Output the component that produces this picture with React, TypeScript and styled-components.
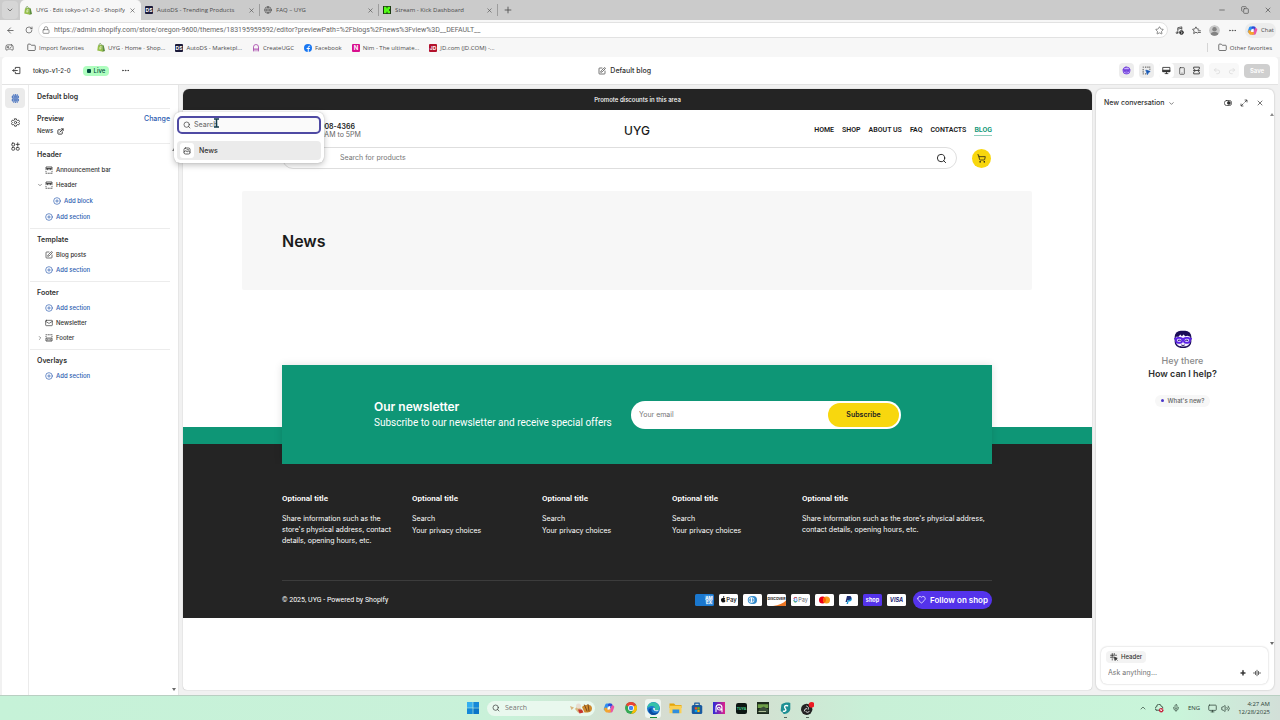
import React from "react";
import styled, { createGlobalStyle } from "styled-components";
import {
  ArrowLeft, ChevronDown, ChevronRight, ChevronUp, CirclePlus, Copy, ExternalLink, Folder, Globe, Heart, Mail,
  Mic, Minus, Monitor, MoreHorizontal, Plus, Redo2, RotateCw, Search, Smartphone, SquarePen,
  Star, Undo2, Volume2, X, Lock, Gamepad2, Image as ImageIcon, ShoppingCart,
} from "lucide-react";

const Global = createGlobalStyle`
  * { box-sizing: border-box; }
  body { margin: 0; background: #f1f1f1; font-family: Inter, "Liberation Sans", sans-serif; font-size: 6px; line-height: 10px; color: #303030; }
  button, input { font: inherit; color: inherit; border: 0; padding: 0; margin: 0; background: none; outline: 0; }
  button { display: inline-flex; align-items: center; justify-content: center; flex: none; white-space: nowrap; }
  a { color: inherit; text-decoration: none; }
  h1, h2, h3, p, ul { margin: 0; padding: 0; font: inherit; list-style: none; }
  svg { display: block; flex: none; }
`;

const Window = styled.div`
  min-height: 100vh;
  display: flex;
  flex-direction: column;
`;

/* ---------- Browser ---------- */
const Chrome = styled.header`
  background: #f7f7f7;
  font-family: "Open Sans", "Noto Sans", sans-serif;
  color: #4a4a4a;
`;
const TabStrip = styled.div`
  display: flex;
  align-items: center;
  height: 20px;
  padding: 0 8px 0 2px;
  background: #cbcbcb;
`;
const TabMenu = styled.button`
  width: 16px;
  height: 18px;
  border-radius: 4px;
  margin-right: 2px;
  background: #d6d6d6;
`;
const Tab = styled.div<{ $active?: boolean }>`
  display: flex;
  align-items: center;
  gap: 4px;
  flex: 0 1 119px;
  height: 20px;
  padding: 0 4px;
  border-right: 1px solid ${(p) => (p.$active ? "#f7f7f7" : "#a8a8a8")};
  border-image: ${(p) => (p.$active ? "none" : "linear-gradient(transparent 25%, #9d9d9d 25%, #9d9d9d 75%, transparent 75%) 1")};
  border-radius: ${(p) => (p.$active ? "5px 5px 0 0" : "0")};
  background: ${(p) => (p.$active ? "#f7f7f7" : "transparent")};
`;
const TabTitle = styled.span`
  flex: 1;
  overflow: hidden;
  white-space: nowrap;
`;
const NewTab = styled.button`
  width: 20px;
  height: 20px;
`;
const WindowButtons = styled.div`
  display: flex;
  gap: 15px;
  margin-left: auto;
`;
const AddressRow = styled.div`
  display: flex;
  align-items: center;
  height: 20px;
  padding: 0 4px 0 6px;
`;
const Nav = styled.div`
  display: flex;
  gap: 10px;
  width: 32px;
`;
const AddressBox = styled.label`
  flex: 1;
  display: flex;
  align-items: center;
  gap: 4px;
  height: 16px;
  padding: 0 3px;
  border: 1px solid #e2e2e2;
  border-radius: 8px;
  background: #fff;
  color: #666;
  font-family: Roboto, "Open Sans", sans-serif;
  font-size: 7px;
`;
const PlainInput = styled.input`
  flex: 1;
  min-width: 0;
  &::placeholder { color: #757575; opacity: 1; }
`;
const BrowserTools = styled.div`
  display: flex;
  align-items: center;
  gap: 8px;
  padding-left: 7px;
`;
const Profile = styled.span`
  width: 11px;
  height: 11px;
  border-radius: 50%;
  overflow: hidden;
`;
const ChatPill = styled.button`
  height: 15px;
  gap: 3px;
  padding: 0 2px;
  border-radius: 7px;
  background: #ececec;
`;
const Bookmarks = styled.nav`
  display: flex;
  align-items: center;
  gap: 10px;
  height: 17px;
  padding: 0 8px 2px 5px;
`;
const Bookmark = styled.a<{ $apart?: boolean }>`
  display: flex;
  align-items: center;
  gap: 3px;
  margin: 0 ${(p) => (p.$apart ? 3 : 0)}px;
  white-space: nowrap;
`;
const Divider = styled.span`
  width: 1px;
  height: 9px;
  background: #d5d5d5;
`;
const Spacer = styled.span`
  flex: 1;
`;

/* ---------- Editor shell ---------- */
const TopBar = styled.div`
  display: flex;
  align-items: center;
  justify-content: space-between;
  height: 28px;
  padding: 0 8px 0 10px;
  margin: 0 2px;
  border-bottom: 1px solid #e3e3e3;
  border-radius: 4px 4px 0 0;
  background: #fff;
  font-weight: 500;
`;
const Cluster = styled.div<{ $gap: number }>`
  display: flex;
  align-items: center;
  gap: ${(p) => p.$gap}px;
`;
const PageName = styled.span`
  font-size: 7px;
`;
const Live = styled.span`
  display: flex;
  align-items: center;
  gap: 3px;
  height: 10px;
  padding: 0 4px;
  border-radius: 4px;
  background: #affebf;
  color: #014b40;
  &::before { content: ""; width: 4px; height: 4px; border-radius: 1px; background: #014b40; }
`;
const ToolButton = styled.button<{ $on?: boolean; $bare?: boolean }>`
  width: 15px;
  height: 15px;
  border-radius: 4px;
  background: ${(p) => (p.$bare ? "transparent" : p.$on ? "#fff" : "#ededed")};
`;
const ToolGroup = styled.div<{ $faint?: boolean }>`
  display: flex;
  border-radius: 4px;
  background: ${(p) => (p.$faint ? "#f8f8f8" : "#ededed")};
  color: ${(p) => (p.$faint ? "#d8d8d8" : "#303030")};
`;
const Save = styled.button`
  width: 26px;
  height: 14px;
  border-radius: 4px;
  background: #cfcfcf;
  color: #fff;
  font-weight: 600;
`;
const Editor = styled.div`
  flex: 1;
  display: flex;
  align-items: stretch;
  margin: 0 2px;
`;
const Rail = styled.nav`
  display: flex;
  flex-direction: column;
  align-items: center;
  gap: 4px;
  width: 27px;
  padding-top: 3px;
  border-right: 1px solid #ebebeb;
  background: #fff;
`;
const RailButton = styled.button<{ $on?: boolean }>`
  width: 20px;
  height: 20px;
  border-radius: 4px;
  background: ${(p) => (p.$on ? "#ebebeb" : "transparent")};
  color: ${(p) => (p.$on ? "#2257b5" : "#303030")};
`;
const Side = styled.aside`
  position: relative;
  width: 150px;
  padding-left: 1px;
  border-right: 1px solid #e6e6e6;
  background: #fff;
  font-weight: 500;
`;
const SideTitle = styled.h1`
  height: 24px;
  margin-right: 8px;
  padding-left: 7px;
  line-height: 24px;
  font-size: 7px;
  font-weight: 600;
  border-bottom: 1px solid #ececec;
`;
const PreviewBlock = styled.div`
  position: relative;
  height: 35px;
  margin-right: 8px;
  padding: 4px 0 0 7px;
  border-bottom: 1px solid #ececec;
`;
const PreviewLine = styled.div`
  display: flex;
  align-items: center;
  gap: 4px;
  height: 12px;
`;
const TextLink = styled.button`
  margin-left: auto;
  color: #2c5cb0;
  font-size: 7px;
  font-weight: 500;
`;
const Section = styled.section`
  margin-right: 8px;
  padding: 4px 0 4px 7px;
  border-bottom: 1px solid #ececec;
  &:last-of-type { border-bottom: 0; }
`;
const SectionTitle = styled.h2`
  line-height: 14px;
  font-size: 7px;
  font-weight: 600;
`;
const Row = styled.button<{ $depth?: number; $link?: boolean }>`
  display: flex;
  justify-content: flex-start;
  gap: 3px;
  width: 100%;
  height: ${(p) => (p.$depth ? 17 : 15)}px;
  padding-left: ${(p) => (p.$depth ? 8 : 0)}px;
  color: ${(p) => (p.$link ? "#2c5cb0" : "#303030")};
`;
const Caret = styled.span`
  width: 6px;
  margin-right: -1px;
`;
const Strong = styled.span`
  font-size: 7px;
  font-weight: 600;
`;
const ScrollArrow = styled.span<{ $up?: boolean; $top?: number; $bottom?: number; $right: number }>`
  position: absolute;
  right: ${(p) => p.$right}px;
  ${(p) => (p.$top !== undefined ? `top: ${p.$top}px;` : `bottom: ${p.$bottom}px;`)}
  border: 2px solid transparent;
  ${(p) => (p.$up ? "border-bottom: 3px solid #8a8a8a; border-top: 0;" : "border-top: 3px solid #6a6a6a; border-bottom: 0;")}
`;

/* ---------- Popover ---------- */
const Popover = styled.div`
  position: absolute;
  z-index: 5;
  left: 144px;
  top: 3px;
  width: 150px;
  padding: 4px 3px 3px;
  border-radius: 6px;
  background: #fff;
  box-shadow: 0 2px 6px rgba(0, 0, 0, 0.25), 0 0 1px rgba(0, 0, 0, 0.3);
  font-size: 7px;
`;
const PopSearch = styled.label`
  display: flex;
  align-items: center;
  gap: 3px;
  height: 18px;
  padding: 0 4px;
  margin: 0 0 7px;
  border: 2px solid #4f4aa3;
  border-radius: 5px;
  background: #fafafa;
`;
const PopItem = styled.button`
  justify-content: flex-start;
  gap: 5px;
  width: 100%;
  height: 19px;
  padding: 0 3px;
  border-radius: 4px;
  background: #ebebeb;
  font-weight: 500;
`;
const PopIcon = styled.span`
  display: grid;
  place-items: center;
  width: 14px;
  height: 15px;
  border-radius: 3px;
  background: #fff;
`;
const Pointer = styled.svg`
  position: absolute;
  left: 39px;
  top: 6px;
`;

/* ---------- Store preview ---------- */
const Store = styled.main`
  flex: 1;
  min-width: 0;
  margin: 4px 4px 5px 4px;
  border-radius: 6px 6px 4px 4px;
  overflow: hidden;
  background: #fff;
  color: #1b1b1b;
  font-size: 7px;
  box-shadow: 0 0 1px rgba(0, 0, 0, 0.4);
`;
const Announcement = styled.p`
  background: #242424;
  color: #fff;
  line-height: 21px;
  text-align: center;
  font-size: 6px;
  font-weight: 500;
`;
const StoreHeader = styled.header`
  display: grid;
  grid-template-columns: 1fr auto 1fr;
  align-items: center;
  height: 37px;
  padding: 4px 100px 0 99px;
`;
const Phone = styled.div`
  display: flex;
  align-items: center;
  gap: 22px;
  line-height: 8px;
`;
const PhoneNumber = styled.p`
  font-weight: 600;
`;
const Hours = styled.p`
  color: #666;
`;
const Logo = styled.a`
  font-size: 12px;
  line-height: 16px;
  font-weight: 500;
`;
const Menu = styled.nav`
  display: flex;
  justify-content: flex-end;
  gap: 8px;
  font-family: Roboto, Inter, sans-serif;
  font-size: 7px;
  font-weight: 600;
`;
const MenuLink = styled.a<{ $current?: boolean }>`
  line-height: 9px;
  white-space: nowrap;
  color: ${(p) => (p.$current ? "#0e9676" : "inherit")};
  border-bottom: 1px solid ${(p) => (p.$current ? "#8fcfbf" : "transparent")};
`;
const SearchRow = styled.div`
  display: flex;
  align-items: center;
  gap: 15px;
  padding: 0 101px 0 99px;
`;
const StoreSearch = styled.label`
  flex: 1;
  display: flex;
  align-items: center;
  height: 22px;
  padding: 0 9px 0 57px;
  border: 1px solid #dedede;
  border-radius: 11px;
`;
const Cart = styled.button`
  width: 19px;
  height: 19px;
  border-radius: 50%;
  background: #f8d70e;
`;
const Hero = styled.section`
  display: flex;
  align-items: center;
  height: 99px;
  margin: 22px 60px 75px 59px;
  padding: 0 40px;
  border-radius: 2px;
  background: #f7f7f7;
`;
const HeroTitle = styled.h1`
  font-size: 16px;
  line-height: 22px;
  font-weight: 600;
`;
const NewsletterBand = styled.section`
  padding: 0 100px 0 99px;
  background: linear-gradient(#fff 62px, #0e9676 62px, #0e9676 79px, #242424 79px);
`;
const NewsletterCard = styled.div`
  display: flex;
  align-items: center;
  justify-content: space-between;
  height: 99px;
  padding: 0 91px 0 92px;
  background: #0e9676;
  color: #fff;
  box-shadow: 0 0 8px rgba(0, 0, 0, 0.12);
`;
const NewsTitle = styled.h2`
  font-size: 12px;
  line-height: 16px;
  font-weight: 600;
`;
const NewsText = styled.p`
  font-family: Roboto, Inter, sans-serif;
  font-size: 10px;
  line-height: 16px;
  white-space: nowrap;
`;
const Subscribe = styled.form`
  display: flex;
  width: 270px;
  height: 28px;
  padding: 2px 2px 2px 8px;
  border-radius: 14px;
  background: #fff;
  color: #222;
`;
const SubscribeButton = styled.button`
  width: 71px;
  border-radius: 12px;
  background: #f8d70e;
  font-weight: 600;
`;
const StoreFooter = styled.footer`
  padding: 0 100px 0 99px;
  background: #242424;
  color: #fff;
`;
const FooterGrid = styled.div`
  display: grid;
  grid-template-columns: repeat(4, 11fr) 19fr;
  gap: 20px;
  height: 117px;
  padding-top: 29px;
  border-bottom: 1px solid #3c3c3c;
`;
const FooterTitle = styled.h3`
  font-family: Roboto, Inter, sans-serif;
  font-size: 8px;
  font-weight: 600;
  line-height: 12px;
  margin-bottom: 8px;
`;
const FooterText = styled.p`
  line-height: 11px;
`;
const FooterLink = styled.a`
  display: block;
  line-height: 12px;
`;
const FooterBottom = styled.div`
  display: flex;
  align-items: center;
  justify-content: space-between;
  height: 37px;
`;
const Copyright = styled.span`
  font-family: Roboto, Inter, sans-serif;
`;
const Follow = styled.button`
  gap: 4px;
  width: 79px;
  height: 18px;
  margin-left: 2px;
  border-radius: 9px;
  background: #5433eb;
  color: #fff;
  font-size: 8px;
  font-weight: 600;
`;

/* ---------- Assistant ---------- */
const AssistantPanel = styled.aside`
  position: relative;
  display: flex;
  flex-direction: column;
  width: 178px;
  margin: 4px 4px 5px 0;
  padding: 0 6px 6px 5px;
  border-radius: 6px;
  background: #fff;
  box-shadow: 0 0 2px rgba(0, 0, 0, 0.25);
`;
const AssistantHeader = styled.div`
  display: flex;
  align-items: center;
  height: 28px;
  gap: 8px;
  padding: 0 4px 0 3px;
`;
const ConversationButton = styled.button`
  gap: 4px;
  margin-right: auto;
  font-size: 7px;
  font-weight: 500;
`;
const Greeting = styled.div`
  flex: 1;
  display: flex;
  flex-direction: column;
  align-items: center;
  justify-content: center;
  font-size: 9px;
  line-height: 13px;
  font-weight: 600;
  padding-bottom: 29px;
  padding-right: 4px;
  text-align: center;
`;
const Hey = styled.p`
  margin-top: 5px;
  color: #8a8a8a;
  font-weight: 500;
`;
const NewPill = styled.button`
  gap: 4px;
  height: 12px;
  margin-top: 15px;
  padding: 0 6px;
  border-radius: 6px;
  background: #f7f7f7;
  color: #616161;
  font-size: 6px;
  font-weight: 500;
  &::before { content: ""; width: 3px; height: 3px; border-radius: 50%; background: #4a35c8; }
`;
const Composer = styled.div`
  display: flex;
  flex-direction: column;
  gap: 4px;
  height: 37px;
  padding: 4px 5px;
  border-radius: 6px;
  box-shadow: 0 0 2px rgba(0, 0, 0, 0.25);
`;
const ContextChip = styled.button`
  align-self: flex-start;
  gap: 3px;
  height: 12px;
  padding: 0 4px;
  border-radius: 4px;
  background: #f3f3f3;
  font-weight: 500;
`;
const ComposerRow = styled.label`
  display: flex;
  align-items: center;
  gap: 6px;
  font-size: 7px;
  padding: 1px 2px 0 2px;
`;

/* ---------- Taskbar ---------- */
const Taskbar = styled.footer`
  display: grid;
  grid-template-columns: 1fr auto 1fr;
  align-items: center;
  height: 25px;
  padding: 0 10px;
  border-top: 1px solid #b9cfc2;
  background: linear-gradient(90deg, #c6f2d8 0%, #c9f1d9 40%, #d6dcd1 50%, #d4dfd1 58%, #c8f0d7 68%, #c9f5da 92%, #d2dfd8 100%);
  font-family: "Open Sans", "Noto Sans", sans-serif;
`;
const Apps = styled.div`
  grid-column: 2;
  display: flex;
  align-items: center;
  gap: 6px;
`;
const AppButton = styled.button<{ $on?: boolean }>`
  position: relative;
  width: 16px;
  height: 19px;
  border-radius: 3px;
  background: ${(p) => (p.$on ? "#eef5ef" : "transparent")};
`;
const Running = styled.span<{ $wide?: boolean }>`
  position: absolute;
  bottom: 0;
  width: ${(p) => (p.$wide ? 7 : 3)}px;
  height: 1px;
  background: ${(p) => (p.$wide ? "#1a8a3a" : "#56665c")};
`;
const TaskSearch = styled.label`
  display: flex;
  align-items: center;
  gap: 5px;
  width: 108px;
  height: 15px;
  padding: 0 2px 0 5px;
  border-radius: 8px;
  background: #e9f8ee;
  font-size: 7px;
`;
const Tray = styled.div`
  justify-self: end;
  display: flex;
  align-items: center;
  gap: 8px;
  color: #2e4237;
`;
const Clock = styled.time`
  text-align: right;
  font-size: 6px;
  line-height: 8px;
`;

/* ---------- Drawings ---------- */
const Svg = ({ s = 8, h, vb = "0 0 16 16", children }: { s?: number; h?: number; vb?: string; children: React.ReactNode }) => (
  <svg width={s} height={h ?? s} viewBox={vb} fill="none" stroke="currentColor" strokeWidth="1.5" strokeLinecap="round" strokeLinejoin="round" aria-hidden="true">{children}</svg>
);
const ShopifyMark = () => (
  <Svg s={8} h={9} vb="0 0 16 18"><g stroke="none"><path d="M2 5l8.500-1.500L12 17.500 0.500 15z" fill="#95bf47" /><path d="M10.500 3.500l3 1.500L16 16l-4.500 1.500z" fill="#5e8e3e" /></g><path d="M4 5c0-5 4-6 4.500-1" stroke="#5e8e3e" /><path d="M8.500 7.600c-2.500-1-3.500 1.200-1.800 2.300s1.200 2.800-1.400 1.900" stroke="#fff" /></Svg>
);
const LetterMark = ({ bg, text, s = 8, fg = "#fff" }: { bg: string; text: string; s?: number; fg?: string }) => (
  <Svg s={s}><rect width="16" height="16" rx="2" fill={bg} stroke="none" /><text x="8" y="12" fontSize={text.length > 1 ? 10 : 12} fontWeight="700" textAnchor="middle" fill={fg} stroke="none" fontFamily="Inter">{text}</text></Svg>
);
const KickMark = () => (
  <Svg s={8}><rect width="16" height="16" fill="#1c3a12" stroke="none" /><path d="M2 1.500h5v3h2v-3h5v5h-2v3h2v5H9v-3H7v3H2z" fill="#53fc18" stroke="none" /></Svg>
);
const Copilot = ({ s = 11 }: { s?: number }) => (
  <Svg s={s}><g strokeWidth="4"><path d="M3 9.500L5 4h4" stroke="#2d8ff0" /><path d="M8.500 4h2l1 3" stroke="#2f49d8" /><path d="M13 6.500L11 12H8" stroke="#e957a5" /><path d="M3.500 9.500L5 12h3.500" stroke="#f3a52f" /></g><path d="M6 10l2-4.500h2L8.500 10z" fill="#fff" stroke="none" /></Svg>
);
const Avatar = () => (
  <Svg s={11}><circle cx="8" cy="8" r="8" fill="#c9c9c9" stroke="none" /><circle cx="8" cy="6" r="3.200" fill="#838383" stroke="none" /><path d="M2.500 13.500c0-5 11-5 11 0-3 3-8 3-11 0z" fill="#838383" stroke="none" /></Svg>
);
const FavoritesIcon = () => (
  <Svg s={9}><path d="M9.500 12.500L7 11l-4 2.500.8-4.500L1 5.800l4-.6L7 1.500l2 3.700 3 .5M11 8.500h4M11 11.500h4" /></Svg>
);
const SectionTop = () => (
  <Svg s={8}><path d="M2 5V2h12v3M2 7.500L3 5h10l1 2.500M5 7.500V5.500M8 7.500V5.500M11 7.500V5.500M2 11v.500M14 11v.500M2 14.500h1M6 14.500h1M9.500 14.500h1M14 14.500h-1" strokeWidth="1.600" /></Svg>
);
const SectionBottom = () => (
  <Svg s={8}><path d="M2 9v5h12V9zM5 11.500h.500M8 11.500h.500M11 11.500h.500M2 5.500V5M2 1.500h1M6 1.500h1M9.500 1.500h1M14 1.500h-1M14 5.500V5" strokeWidth="1.600" /></Svg>
);
const SectionsIcon = () => (
  <Svg s={9}><path d="M3 3.500h10v3.500H3zM3 9h10v3.500H3zM5 1v1M8 1v1M11 1v1M5 14.500v.500M8 14.500v.500M11 14.500v.500M5.500 5.200h5M5.500 10.800h5" /></Svg>
);
const GearIcon = () => (
  <Svg s={9}><path d="M6.500 1.500h3l.6 2 1.600.9 2-.6 1.500 2.600L13.700 8l1.500 1.600-1.500 2.600-2-.6-1.600.9-.6 2h-3l-.6-2-1.600-.9-2 .6L.8 9.600 2.300 8 .8 6.400l1.500-2.600 2 .6 1.600-.9z" /><circle cx="8" cy="8" r="2" /></Svg>
);
const AppsIcon = () => (
  <Svg s={9}><rect x="1.500" y="2" width="5" height="5" rx="1.500" /><rect x="1.500" y="9.500" width="5" height="5" rx="1.500" /><rect x="9.500" y="9.500" width="5" height="5" rx="1.500" /><path d="M12 1.500v5.500M9.300 4.200h5.500" /></Svg>
);
const SidekickIcon = () => (
  <Svg s={9}><g stroke="#6a35d8"><rect x="2" y="2" width="12" height="12" rx="5" fill="#c9b3fb" /><path d="M2 6.500h12M4 8h3.500v1.500H4zM9 8h3.500v1.500H9zM6.500 12h3" /></g></Svg>
);
const SelectIcon = () => (
  <Svg s={9}><path d="M2 2h.500M6 2h1M10 2h1M14 2h-.500M2 6v1M2 10v1M2 14h.500M6 14h1M14 5.500V6" /><path d="M7.500 7.500l7 2.300-3 1.500-1.500 3.200z" fill="#1556b4" stroke="#1556b4" /></Svg>
);
const DesktopIcon = () => (
  <Svg s={9}><path d="M2 2.500h12v7.500H2z" /><path d="M2 7.500h12V10H2z" fill="currentColor" /><path d="M5.500 13.500h5M8 10.500v3" /></Svg>
);
const FullWidthIcon = () => (
  <Svg s={9}><path d="M3 5V2h10v3M3 11v3h10v-3M3.500 8h9M5 6L3 8l2 2M11 6l2 2-2 2" /></Svg>
);
const ExpandIcon = () => (
  <Svg s={8}><path d="M10 2h4v4M13.500 2.500L9.500 6.500M6 14H2v-4M2.500 13.500l4-4" /></Svg>
);
const PanelToggle = () => (
  <Svg s={8}><rect x="1" y="3" width="14" height="10" rx="4" /><rect x="7" y="5.500" width="5.500" height="5" rx="1.500" fill="currentColor" /></Svg>
);
const SidekickFace = () => (
  <Svg s={20} vb="0 0 36 36">
    <rect x="3" y="3" width="30" height="31" rx="11" fill="#1a0b57" stroke="none" />
    <path d="M5 14h5l3-4 3 3 3-3 3 3 4-1 5 2v9c-2 8-8 8.500-13 8.500S7 31 5 23z" fill="#f4efff" stroke="none" />
    <rect x="2" y="16" width="32" height="3" fill="#5b21e6" stroke="none" />
    <rect x="5.500" y="16" width="11" height="9" rx="4" fill="#cdb6ff" stroke="#5b21e6" strokeWidth="3" />
    <rect x="19.500" y="16" width="11" height="9" rx="4" fill="#cdb6ff" stroke="#5b21e6" strokeWidth="3" />
    <path d="M9.500 21.500l2-2 2 2M22.500 21.500l2-2 2 2M15.500 29c1.500 1 3.500 1 5 0" stroke="#1a0b57" strokeWidth="1.800" />
  </Svg>
);
const SparkIcon = () => (
  <Svg s={8}><path d="M8 3c.5 3.500 1.500 4.500 5 5-3.500.5-4.500 1.500-5 5-.5-3.500-1.500-4.500-5-5 3.500-.5 4.500-1.500 5-5z" fill="currentColor" /></Svg>
);
const WaveIcon = () => (
  <Svg s={8}><path d="M2 7v2M5 5v6M8 2.500v11M11 5v6M14 7v2" /></Svg>
);
const TargetIcon = () => (
  <Svg s={8}><path d="M4.500 1v3M8.500 1v3M1 4.500h3M1 8.500h3M4.500 4.500h4M4.500 4.500v6M11 4.500h2M4.500 13v1" /><path d="M8 8l6.500 2.500-3 1-1 3z" fill="currentColor" /><path d="M12 12l2.500 2.500" /></Svg>
);
const BlogIcon = () => (
  <Svg s={8}><rect x="2" y="2" width="12" height="12" rx="3" /><path d="M2 10l3.500-2.500 3 2 2-1.500 3.500 2.500M8 5.500h3" /></Svg>
);

const Pay = ({ bg = "#fff", children }: { bg?: string; children: React.ReactNode }) => (
  <svg width="19" height="12" viewBox="0 0 38 24" aria-hidden="true" fontFamily="Inter" fontWeight="700" textAnchor="middle"><rect width="38" height="24" rx="3" fill={bg} />{children}</svg>
);
const Payments = () => (
  <>
    <Pay bg="#1a78cf"><g fontSize="9" fill="#fff"><path d="M19 3h17v18H22z" fill="#4f9be0" /><text x="28" y="11">AM</text><text x="28" y="20">EX</text></g></Pay>
    <Pay><path d="M8 8c1-1 4-1 4.500 1-2 1-1.500 4 .5 4.500-1 3-2.500 4-4.500 3-2 1-4-1-4.500-4S5.500 7.500 8 8zM8 7c0-2 1-3 2.500-3 0 2-1 3-2.500 3z" fill="#111" /><text x="25" y="16" fontSize="12" fontWeight="500" fill="#111">Pay</text></Pay>
    <Pay><circle cx="20" cy="12" r="8" fill="#3086c8" /><circle cx="17" cy="12" r="7.500" fill="#3f97d6" /><circle cx="17" cy="12" r="5.500" fill="#fff" /><path d="M15.500 8v8a4.200 4.200 0 010-8zM18.500 8v8a4.200 4.200 0 000-8z" fill="#3086c8" /></Pay>
    <Pay><path d="M38 13v8a3 3 0 01-3 3H12c12-2 20-5 26-11z" fill="#ee7623" /><text x="19" y="12" fontSize="7" fill="#222">DISCOVER</text></Pay>
    <Pay><text x="9" y="16" fontSize="11" fill="#4285f4">G</text><path d="M5 13c1 3 4 4 6 2.500" stroke="#34a853" strokeWidth="2" fill="none" /><path d="M5.500 9c1-2 4-3 6-1" stroke="#ea4335" strokeWidth="2" fill="none" /><text x="24" y="16" fontSize="11" fontWeight="400" fill="#5f6368">Pay</text></Pay>
    <Pay><circle cx="15" cy="12" r="7" fill="#eb001b" /><circle cx="23" cy="12" r="7" fill="#f79e1b" /><path d="M19 6.300a7 7 0 010 11.400 7 7 0 010-11.400z" fill="#ff5f00" /></Pay>
    <Pay><path d="M19 7h5c3 1 2 8-3 8h-2l-1 5h-3z" fill="#179bd7" /><path d="M16 4h6c4 0 4 8-3 8h-2l-1 4h-3z" fill="#1f2f74" /></Pay>
    <Pay bg="#5433eb"><text x="19" y="15" fontSize="11" fill="#fff">shop</text></Pay>
    <Pay><text x="19" y="16" fontSize="11" fontStyle="italic" fill="#1a1f71">VISA</text></Pay>
  </>
);

const WindowsIcon = () => <Svg s={12}><g stroke="none" fill="#1588d8"><path d="M0 0h7.600v7.600H0z" fill="#34aef0" /><path d="M8.400 0H16v7.600H8.400zM0 8.400h7.600V16H0z" /><path d="M8.400 8.400H16V16H8.400z" fill="#0a74c8" /></g></Svg>;
const ChromeIcon = () => <Svg s={12}><g stroke="none"><circle cx="8" cy="8" r="8" fill="#34a853" /><path d="M8 8L1 4a8 8 0 0114 0z" fill="#ea4335" /><path d="M8 8l7-4a8 8 0 01-7 12l3.500-6z" fill="#fbbc05" /><circle cx="8" cy="8" r="4" fill="#fff" /><circle cx="8" cy="8" r="3" fill="#4285f4" /></g></Svg>;
const EdgeIcon = () => <Svg s={13}><g stroke="none"><circle cx="8" cy="8" r="8" fill="#1b78cf" /><path d="M0 8C1 1 7-1 11 1s6 7 3 9H9c2-3 0-5-3-5S1 7 0 8z" fill="#35c1a8" /><path d="M6 8c-2 4 2 7 7 5l1.500-.5c-3 4-8 4.500-11 1.500S2 7 6 8z" fill="#0c4ba0" /><path d="M7.500 7.500c2-1 3 .5 2 2.500h5c-2 2.500-7 2-7-2.500z" fill="#eaf6f5" /></g></Svg>;
const ExplorerIcon = () => <Svg s={13} h={12}><g stroke="none"><path d="M0 2h6l2 2h8v4H0z" fill="#e5a50a" /><path d="M0 5h16v10H0z" fill="#fbd054" /><path d="M4 10h9v5H4z" fill="#2f8ede" /></g></Svg>;
const StoreIcon = () => <Svg s={12}><g stroke="none"><rect x="1" y="4" width="14" height="12" rx="2" fill="#195aa0" /><path d="M5 7h3v3H5z" fill="#f25022" /><path d="M8.500 7h3v3h-3z" fill="#7fba00" /><path d="M5 10.500h3v3H5z" fill="#00a4ef" /><path d="M8.500 10.500h3v3h-3z" fill="#ffb900" /></g><path d="M5 4V1.500h6V4" stroke="#195aa0" /></Svg>;
const UgcIcon = () => <Svg s={12}><defs><linearGradient id="ugc"><stop stopColor="#2b2bd8" /><stop offset="1" stopColor="#e0218a" /></linearGradient></defs><rect width="16" height="16" fill="url(#ugc)" stroke="none" /><g stroke="#fff"><path d="M4 13V7.500a4 4 0 018 0c0 4-6 4-6 1 0-2 3.500-2 3.500 0M12 9v4" /></g></Svg>;
const WorkIcon = () => <Svg s={11}><rect width="16" height="16" rx="3" fill="#0c1512" stroke="none" /><text x="8" y="10" fontSize="5" fontWeight="700" fill="#48d597" stroke="none" textAnchor="middle" fontFamily="Inter">TUYA</text></Svg>;
const GameIcon = () => <Svg s={12}><g stroke="none"><rect width="16" height="16" fill="#1d2a1d" /><path d="M1 3h14v5H1z" fill="#6e9f48" /><path d="M3 9l6-3 6 4v4H2z" fill="#394c39" /><path d="M2 12h10v1H2z" fill="#d8e6b8" /></g></Svg>;
const SharkIcon = () => <Svg s={11} h={13} vb="0 0 16 18"><path d="M2 3c5-3 9-3 13-2v9c-1 5-6 7-10 7 0-3-3-2-4-5z" fill="#1d8f93" stroke="none" /><path d="M11 5c-4-1-5 1-4 3s3 3 0 5H5" stroke="#fff" strokeWidth="2" /></Svg>;
const ObsIcon = () => <Svg s={13}><circle cx="7" cy="9" r="7" fill="#232323" stroke="none" /><g stroke="#ddd" strokeWidth="1.200"><path d="M7 5a3 3 0 012 4M4 11a3 3 0 013-3M10 12a3 3 0 01-4 0" /></g><circle cx="13" cy="3.500" r="3.500" fill="#ec1a23" stroke="none" /></Svg>;
const HolidayArt = () => <Svg s={24} h={12} vb="0 0 48 24"><g stroke="none"><path d="M2 8l8 3-5 5zM12 14l6-8 6 8-5 8z" fill="#d8b67e" /><circle cx="19" cy="8" r="5" fill="#e8ddd0" /><path d="M18 15h8l3 6-8 2z" fill="#c8332e" /><path d="M26 10c6-7 20-6 20 2s-6 10-15 9z" fill="#cf8a2d" /><path d="M31 6l5 12M38 5l2 13" stroke="#7a4a1c" strokeWidth="2" /></g></Svg>;

const tabs = [
  { title: "UYG · Edit tokyo-v1-2-0 · Shopify", icon: <ShopifyMark /> },
  { title: "AutoDS - Trending Products", icon: <LetterMark bg="#1c1b3a" text="DS" /> },
  { title: "FAQ – UYG", icon: <Globe size={8} /> },
  { title: "Stream - Kick Dashboard", icon: <KickMark /> },
];
const bookmarks = [
  { title: "UYG · Home · Shop...", icon: <ShopifyMark /> },
  { title: "AutoDS - Marketpl...", icon: <LetterMark bg="#1c1b3a" text="DS" /> },
  { title: "CreateUGC", icon: <Svg><path d="M3 14V6a5 5 0 0110 0v8M3 10h10M6 14v-3M10 14v-3" stroke="#a23aa5" /></Svg> },
  { title: "Facebook", icon: <Svg><circle cx="8" cy="8" r="8" fill="#1877f2" stroke="none" /><path d="M8.500 16V7c0-2 1-3 3-2.500M6 9h5" stroke="#fff" strokeWidth="2" /></Svg> },
  { title: "Nim - The ultimate...", icon: <LetterMark bg="#d9108e" text="N" /> },
  { title: "JD.com (JD.COM) -...", icon: <LetterMark bg="#b3122c" text="JD" /> },
];
const menu = ["HOME", "SHOP", "ABOUT US", "FAQ", "CONTACTS", "BLOG"];

const AddRow = ({ label = "Add section", depth }: { label?: string; depth?: number }) => (
  <Row $link $depth={depth}><Caret /><CirclePlus size={8} />{label}</Row>
);

export default function App() {
  return (
    <Window>
      <Global />
      <Chrome>
        <TabStrip>
          <TabMenu aria-label="Tab actions"><ChevronDown size={8} /></TabMenu>
          {tabs.map((t, i) => (
            <Tab key={t.title} $active={i === 0}>{t.icon}<TabTitle>{t.title}</TabTitle><button aria-label="Close tab"><X size={7} /></button></Tab>
          ))}
          <NewTab aria-label="New tab"><Plus size={10} /></NewTab>
          <WindowButtons>
            <button aria-label="Minimize"><Minus size={8} /></button>
            <button aria-label="Restore"><Copy size={8} /></button>
            <button aria-label="Close"><X size={8} /></button>
          </WindowButtons>
        </TabStrip>
        <AddressRow>
          <Nav>
            <button aria-label="Back"><ArrowLeft size={9} /></button>
            <button aria-label="Reload"><RotateCw size={8} /></button>
          </Nav>
          <AddressBox>
            <Lock size={8} />
            <PlainInput aria-label="Address" defaultValue="https://admin.shopify.com/store/oregon-9600/themes/183195959592/editor?previewPath=%2Fblogs%2Fnews%3Fview%3D__DEFAULT__" />
            <Star size={9} />
          </AddressBox>
          <BrowserTools>
            <Svg s={9}><path d="M5 12V3l7-1.500V6M5 5.500L12 4" /><circle cx="3.500" cy="12" r="1.500" /><circle cx="11.500" cy="11.500" r="3.500" fill="#222" /><path d="M11 10l1.500 1.500L11 13" stroke="#fff" /></Svg>
            <FavoritesIcon />
            <Profile><Avatar /></Profile>
            <MoreHorizontal size={9} />
            <ChatPill><Copilot />Chat</ChatPill>
          </BrowserTools>
        </AddressRow>
        <Bookmarks>
          <Gamepad2 size={9} />
          <Bookmark href="#" $apart><Folder size={9} />Import favorites</Bookmark>
          {bookmarks.map((b) => <Bookmark href="#" key={b.title}>{b.icon}{b.title}</Bookmark>)}
          <Spacer />
          <Divider />
          <Bookmark href="#"><Folder size={9} />Other favorites</Bookmark>
        </Bookmarks>
      </Chrome>

      <TopBar>
        <Cluster $gap={12}>
          <button aria-label="Exit"><Svg s={9}><path d="M6 5V2.500h8v11H6V11M9.500 8H1.500M4 5.500L1.500 8 4 10.500" /></Svg></button>
          <span>tokyo-v1-2-0</span>
          <Live>Live</Live>
          <button aria-label="More actions"><MoreHorizontal size={9} /></button>
        </Cluster>
        <Cluster $gap={4}><SquarePen size={8} /><PageName>Default blog</PageName></Cluster>
        <Cluster $gap={5}>
          <ToolButton aria-label="Sidekick"><SidekickIcon /></ToolButton>
          <ToolButton aria-label="Inspector"><SelectIcon /></ToolButton>
          <ToolGroup>
            <ToolButton $on aria-label="Desktop"><DesktopIcon /></ToolButton>
            <ToolButton aria-label="Mobile"><Smartphone size={8} /></ToolButton>
            <ToolButton aria-label="Full width"><FullWidthIcon /></ToolButton>
          </ToolGroup>
          <ToolGroup $faint>
            <ToolButton $bare aria-label="Undo"><Undo2 size={8} /></ToolButton>
            <ToolButton $bare aria-label="Redo"><Redo2 size={8} /></ToolButton>
          </ToolGroup>
          <Save>Save</Save>
        </Cluster>
      </TopBar>

      <Editor>
        <Rail>
          <RailButton $on aria-label="Sections"><SectionsIcon /></RailButton>
          <RailButton aria-label="Theme settings"><GearIcon /></RailButton>
          <RailButton aria-label="App embeds"><AppsIcon /></RailButton>
        </Rail>
        <Side>
          <SideTitle>Default blog</SideTitle>
          <PreviewBlock>
            <PreviewLine><Strong>Preview</Strong><TextLink>Change</TextLink></PreviewLine>
            <PreviewLine>News <ExternalLink size={7} strokeWidth={3} /></PreviewLine>
            <Popover>
              <PopSearch><Search size={8} /><PlainInput placeholder="Search" aria-label="Search blogs" /></PopSearch>
              <PopItem><PopIcon><BlogIcon /></PopIcon>News</PopItem>
              <Pointer width="7" height="10" viewBox="0 0 7 10" fill="none" stroke="#153c4c" strokeWidth="1.500"><path d="M1 1h5M3.500 1v8M1 9h5" /></Pointer>
            </Popover>
          </PreviewBlock>
          <Section>
            <SectionTitle>Header</SectionTitle>
            <Row><Caret /><SectionTop />Announcement bar</Row>
            <Row><Caret><ChevronDown size={6} /></Caret><SectionTop />Header</Row>
            <AddRow label="Add block" depth={1} />
            <AddRow />
          </Section>
          <Section>
            <SectionTitle>Template</SectionTitle>
            <Row><Caret /><SquarePen size={8} />Blog posts</Row>
            <AddRow />
          </Section>
          <Section>
            <SectionTitle>Footer</SectionTitle>
            <AddRow />
            <Row><Caret /><Mail size={8} />Newsletter</Row>
            <Row><Caret><ChevronRight size={6} /></Caret><SectionBottom />Footer</Row>
          </Section>
          <Section>
            <SectionTitle>Overlays</SectionTitle>
            <AddRow />
          </Section>
          <ScrollArrow $up $top={63} $right={2} />
          <ScrollArrow $bottom={4} $right={2} />
        </Side>

        <Store>
          <Announcement>Promote discounts in this area</Announcement>
          <StoreHeader>
            <Phone><Smartphone size={16} /><div><PhoneNumber>908-4366</PhoneNumber><Hours>9AM to 5PM</Hours></div></Phone>
            <Logo href="#">UYG</Logo>
            <Menu>{menu.map((m) => <MenuLink href="#" key={m} $current={m === "BLOG"}>{m}</MenuLink>)}</Menu>
          </StoreHeader>
          <SearchRow>
            <StoreSearch><PlainInput placeholder="Search for products" aria-label="Search for products" /><Search size={11} strokeWidth={2} /></StoreSearch>
            <Cart aria-label="Cart"><ShoppingCart size={9} /></Cart>
          </SearchRow>
          <Hero><HeroTitle>News</HeroTitle></Hero>
          <NewsletterBand>
            <NewsletterCard>
              <div><NewsTitle>Our newsletter</NewsTitle><NewsText>Subscribe to our newsletter and receive special offers</NewsText></div>
              <Subscribe onSubmit={(e) => e.preventDefault()}>
                <PlainInput type="email" placeholder="Your email" aria-label="Your email" />
                <SubscribeButton>Subscribe</SubscribeButton>
              </Subscribe>
            </NewsletterCard>
          </NewsletterBand>
          <StoreFooter>
            <FooterGrid>
              <div><FooterTitle>Optional title</FooterTitle><FooterText>Share information such as the store's physical address, contact details, opening hours, etc.</FooterText></div>
              {[1, 2, 3].map((n) => (
                <div key={n}><FooterTitle>Optional title</FooterTitle><FooterLink href="#">Search</FooterLink><FooterLink href="#">Your privacy choices</FooterLink></div>
              ))}
              <div><FooterTitle>Optional title</FooterTitle><FooterText>Share information such as the store's physical address, contact details, opening hours, etc.</FooterText></div>
            </FooterGrid>
            <FooterBottom>
              <Copyright>© 2025, UYG - Powered by Shopify</Copyright>
              <Cluster $gap={5}><Payments /><Follow><Heart size={9} />Follow on shop</Follow></Cluster>
            </FooterBottom>
          </StoreFooter>
        </Store>

        <AssistantPanel>
          <AssistantHeader>
            <ConversationButton>New conversation <ChevronDown size={7} /></ConversationButton>
            <button aria-label="Toggle panel"><PanelToggle /></button>
            <button aria-label="Expand"><ExpandIcon /></button>
            <button aria-label="Close assistant"><X size={8} /></button>
          </AssistantHeader>
          <Greeting>
            <SidekickFace />
            <Hey>Hey there</Hey>
            <p>How can I help?</p>
            <NewPill>What's new?</NewPill>
          </Greeting>
          <Composer>
            <ContextChip><TargetIcon />Header</ContextChip>
            <ComposerRow><PlainInput placeholder="Ask anything..." aria-label="Ask anything" /><SparkIcon /><WaveIcon /></ComposerRow>
          </Composer>
          <ScrollArrow $up $top={24} $right={0} />
          <ScrollArrow $bottom={45} $right={0} />
        </AssistantPanel>
      </Editor>

      <Taskbar>
        <Apps>
          <AppButton aria-label="Start"><WindowsIcon /></AppButton>
          <TaskSearch><Search size={8} /><PlainInput placeholder="Search" aria-label="Search Windows" /><HolidayArt /></TaskSearch>
          <AppButton aria-label="Copilot"><Copilot s={12} /></AppButton>
          <AppButton aria-label="Chrome"><ChromeIcon /></AppButton>
          <AppButton $on aria-label="Edge"><EdgeIcon /><Running $wide /></AppButton>
          <AppButton aria-label="Explorer"><ExplorerIcon /></AppButton>
          <AppButton aria-label="Store"><StoreIcon /></AppButton>
          <AppButton aria-label="CreateUGC"><UgcIcon /></AppButton>
          <AppButton aria-label="Tools"><WorkIcon /></AppButton>
          <AppButton aria-label="Game"><GameIcon /></AppButton>
          <AppButton aria-label="Surfshark"><SharkIcon /><Running /></AppButton>
          <AppButton aria-label="OBS"><ObsIcon /><Running /></AppButton>
        </Apps>
        <Tray>
          <ChevronUp size={8} />
          <Svg s={9}><path d="M3 11a3 3 0 010-6 4 4 0 018-1 3 3 0 013 3M3 11h4" /><circle cx="11" cy="11" r="4" fill="#c4213a" stroke="none" /><path d="M9.800 9.800l2.400 2.400M12.200 9.800l-2.400 2.400" stroke="#fff" /></Svg>
          <Mic size={8} />
          <span>ENG</span>
          <Cluster $gap={4}><Monitor size={9} /><Volume2 size={9} /></Cluster>
          <Clock>4:27 AM<br />12/28/2025</Clock>
        </Tray>
      </Taskbar>
    </Window>
  );
}
